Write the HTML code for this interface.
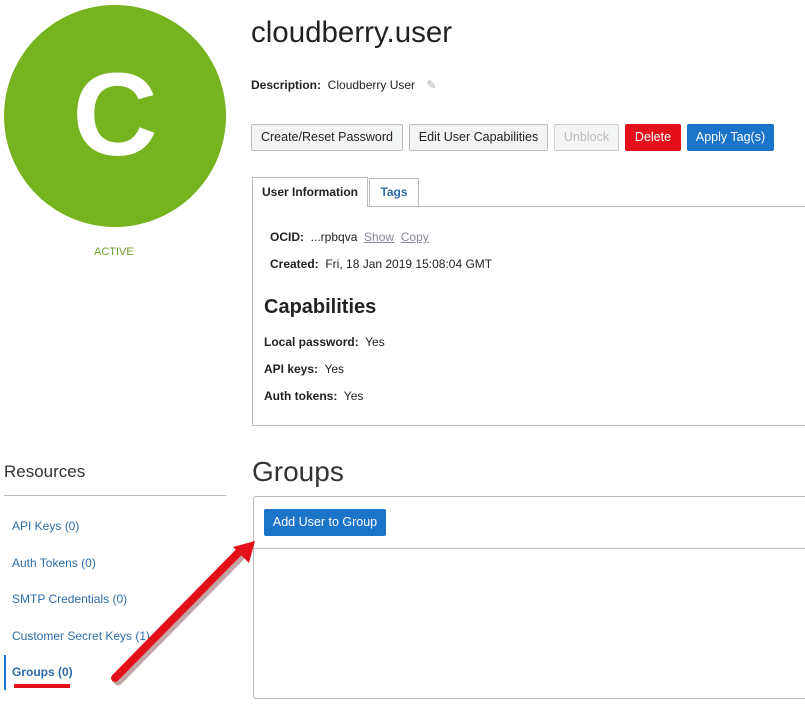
<!DOCTYPE html><html><head><style>
body{margin:0;width:805px;height:715px;background:#fff;font-family:"Liberation Sans",sans-serif;position:relative;overflow:hidden;color:#222}
.a{position:absolute;white-space:nowrap}
.btn{position:absolute;top:124px;height:27px;box-sizing:border-box;border:1px solid #bbb;border-radius:2px;background:#f3f5f4;font-size:12.5px;line-height:25px;text-align:center;color:#222}
.lnk{position:absolute;left:12px;font-size:12px;color:#2a6ca8}
</style></head><body>
<div class="a" style="left:4px;top:5px;width:222px;height:222px;border-radius:50%;background:#77b31e"></div>
<div class="a" style="left:4px;top:50px;width:222px;text-align:center;font-size:118px;font-weight:bold;color:#fff;line-height:130px">C</div>
<div class="a" style="left:94px;top:246px;font-size:11px;color:#6a9e2a">ACTIVE</div>
<div class="a" style="left:251px;top:16px;font-size:29.5px;color:#222">cloudberry.user</div>
<div class="a" style="left:251px;top:78px;font-size:12px"><b>Description:</b>&nbsp; Cloudberry User <span style="color:#aaa;margin-left:8px">✎</span></div>
<div class="btn" style="left:251px;width:152px">Create/Reset Password</div>
<div class="btn" style="left:409px;width:139px">Edit User Capabilities</div>
<div class="btn" style="left:554px;width:65px;color:#bbb;border-color:#ccc">Unblock</div>
<div class="btn" style="left:625px;width:56px;background:#e3101c;border-color:#e3101c;color:#fff">Delete</div>
<div class="btn" style="left:687px;width:87px;background:#1a74c9;border-color:#1a74c9;color:#fff">Apply Tag(s)</div>
<div class="a" style="left:252px;top:206px;width:560px;height:220px;border:1px solid #bbb;border-right:none;box-sizing:border-box"></div>
<div class="a" style="left:252px;top:177px;width:116px;height:30px;border:1px solid #bbb;border-bottom:none;background:#fff;box-sizing:border-box;font-size:12px;font-weight:bold;line-height:28px;text-align:center">User Information</div>
<div class="a" style="left:369px;top:178px;width:50px;height:28px;border:1px solid #bbb;border-bottom:none;box-sizing:border-box;font-size:12px;font-weight:bold;color:#2a6ca8;line-height:26px;text-align:center">Tags</div>
<div class="a" style="left:270px;top:230px;font-size:12px"><b>OCID:</b>&nbsp; ...rpbqva&nbsp; <u style="color:#889">Show</u>&nbsp; <u style="color:#889">Copy</u></div>
<div class="a" style="left:270px;top:257px;font-size:12px"><b>Created:</b>&nbsp; Fri, 18 Jan 2019 15:08:04 GMT</div>
<div class="a" style="left:264px;top:296px;font-size:20px;font-weight:bold">Capabilities</div>
<div class="a" style="left:264px;top:335px;font-size:12px"><b>Local password:</b>&nbsp; Yes</div>
<div class="a" style="left:264px;top:362px;font-size:12px"><b>API keys:</b>&nbsp; Yes</div>
<div class="a" style="left:264px;top:389px;font-size:12px"><b>Auth tokens:</b>&nbsp; Yes</div>
<div class="a" style="left:4px;top:462px;font-size:17px;color:#333">Resources</div>
<div class="a" style="left:4px;top:495px;width:222px;height:1px;background:#bbb"></div>
<div class="lnk" style="top:519px">API Keys (0)</div>
<div class="lnk" style="top:556px">Auth Tokens (0)</div>
<div class="lnk" style="top:592px">SMTP Credentials (0)</div>
<div class="lnk" style="top:629px">Customer Secret Keys (1)</div>
<div class="lnk" style="top:665px;font-weight:bold">Groups (0)</div>
<div class="a" style="left:4px;top:655px;width:2px;height:35px;background:#1a74c9"></div>
<div class="a" style="left:14px;top:684px;width:56px;height:4px;background:#e3101c"></div>
<div class="a" style="left:252px;top:456px;font-size:28px;color:#333">Groups</div>
<div class="a" style="left:253px;top:496px;width:560px;height:203px;border:1px solid #bbb;border-right:none;border-radius:3px 0 0 3px;box-sizing:border-box"></div>
<div class="a" style="left:253px;top:548px;width:552px;height:1px;background:#bbb"></div>
<div class="a" style="left:264px;top:509px;width:122px;height:27px;background:#1a74c9;border-radius:2px;color:#fff;font-size:12.5px;line-height:27px;text-align:center">Add User to Group</div>
<svg class="a" style="left:0;top:0" width="805" height="715"><line x1="118" y1="681" x2="240" y2="557" stroke="#500" stroke-width="9" stroke-linecap="round" opacity=".35"/><line x1="115" y1="678" x2="238" y2="553" stroke="#e3101c" stroke-width="8" stroke-linecap="round"/><polygon points="255,541 233,547 249,563" fill="#e3101c"/></svg>
</body></html>
